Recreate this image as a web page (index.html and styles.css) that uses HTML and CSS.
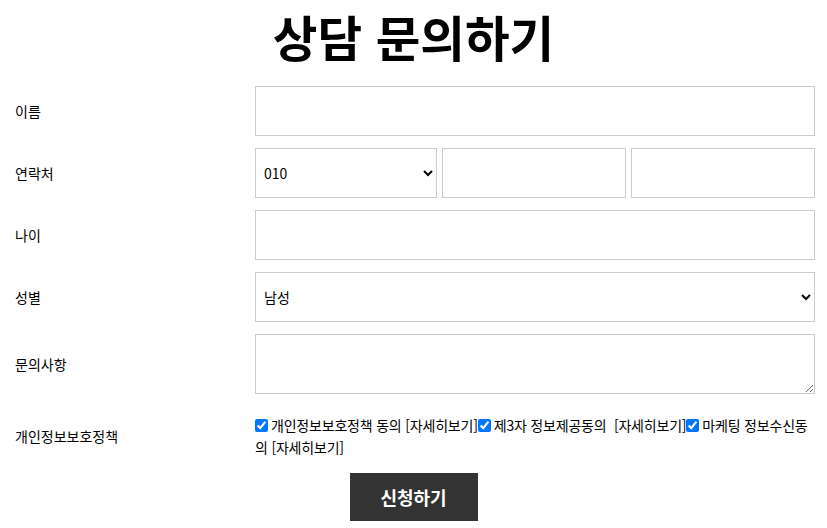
FILE: index.html
```html
<!DOCTYPE html>
<html lang="ko">

<head>
    <meta charset="UTF-8">
    <meta name="viewport" content="width=device-width, initial-scale=1.0">
    <title>상담 문의하기</title>
    <link rel="stylesheet" href="styles.css">
</head>

<body>
    <h1 class="title">상담 문의하기</h1>

    <form class="inquiry" action="#" method="post">
        <div class="row">
            <label class="label">이름</label>
            <div class="field"><input type="text" name="name"></div>
        </div>
        <div class="row">
            <label class="label">연락처</label>
            <div class="field phone">
                <select name="tel1">
                    <option>010</option>
                    <option>011</option>
                    <option>016</option>
                </select>
                <input type="text" name="tel2">
                <input type="text" name="tel3">
            </div>
        </div>
        <div class="row">
            <label class="label">나이</label>
            <div class="field"><input type="text" name="age"></div>
        </div>
        <div class="row">
            <label class="label">성별</label>
            <div class="field">
                <select name="gender">
                    <option>남성</option>
                    <option>여성</option>
                </select>
            </div>
        </div>
        <div class="row">
            <label class="label">문의사항</label>
            <div class="field"><textarea name="memo"></textarea></div>
        </div>
        <div class="row agree-row">
            <label class="label">개인정보보호정책</label>
            <div class="field agree">
                <label><input type="checkbox" checked>개인정보보호정책 동의 <a href="#">[자세히보기]</a></label><label><input type="checkbox" checked>제3자 정보제공동의&nbsp; <a href="#">[자세히보기]</a></label><label><input type="checkbox" checked>마케팅 정보수신동의 <a href="#">[자세히보기]</a></label>
            </div>
        </div>
        <div class="submit-wrap">
            <button type="submit" class="btn">신청하기</button>
        </div>
    </form>
</body>

</html>
```

FILE: styles.css
```css
body {
    margin: 8px;
    font-family: "Noto Sans CJK KR", "Noto Sans", sans-serif;
    color: #000;
    background: #fff;
}

.title {
    margin: 0;
    font-size: 48.5px;
    line-height: 56px;
    font-weight: 700;
    text-align: center;
    padding-bottom: 22px;
}

.row {
    display: grid;
    grid-template-columns: 240px 1fr;
    align-items: center;
    padding: 0 4px 0 7px;
    margin-bottom: 12px;
}

.label {
    font-size: 14px;
}

.field input[type="text"],
.field select,
.field textarea {
    box-sizing: border-box;
    width: 100%;
    height: 50px;
    border: 1px solid #ccc;
    border-radius: 0;
    background: #fff;
    padding: 0 10px;
    font-family: inherit;
    font-size: 14px;
    color: #000;
}

.field select {
    padding-left: 4px;
}

.field textarea {
    height: 60px;
    display: block;
    resize: vertical;
}

.phone {
    display: grid;
    grid-template-columns: 182px 1fr 1fr;
    gap: 5px;
}

.agree-row {
    padding-top: 8px;
}

.agree {
    font-size: 14px;
    line-height: 22px;
    letter-spacing: -0.2px;
}

.agree input {
    margin: 0 3px 0 0;
    width: 13px;
    height: 13px;
    vertical-align: -1px;
}

.agree a {
    color: #000;
    text-decoration: none;
}

.submit-wrap {
    text-align: center;
    padding-top: 3px;
}

.btn {
    width: 128px;
    height: 48px;
    border: none;
    background-color: #333;
    color: #fff;
    font-family: inherit;
    font-size: 18px;
    font-weight: 700;
    cursor: pointer;
}
```
